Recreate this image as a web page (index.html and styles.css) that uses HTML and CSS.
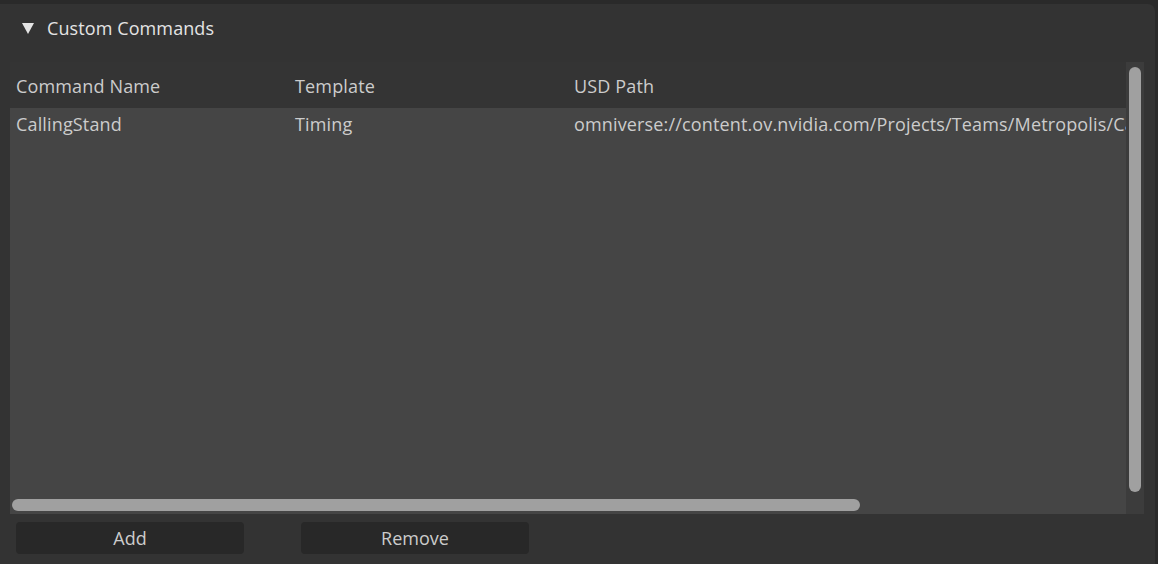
FILE: index.html
```html
<!DOCTYPE html>
<html lang="en">
<head>
	<meta charset="utf-8">
	<title>Custom Commands</title>
	<link rel="stylesheet" href="styles.css">
</head>
<body>

<div class="frame">
	<div class="title">
		<span class="arrow"></span>
		<span class="label">Custom Commands</span>
	</div>

	<div class="table">
		<div class="view">
			<div class="row head">
				<div class="cell">Command Name</div>
				<div class="cell">Template</div>
				<div class="cell">USD Path</div>
			</div>
			<div class="body">
				<div class="row">
					<div class="cell">CallingStand</div>
					<div class="cell">Timing</div>
					<div class="cell wide">omniverse://content.ov.nvidia.com/Projects/Teams/Metropolis/CallingStand.usd</div>
				</div>
				<div class="hscroll"><div class="thumb"></div></div>
			</div>
		</div>
		<div class="vscroll"><div class="thumb"></div></div>
	</div>

	<div class="buttons">
		<button type="button">Add</button>
		<button type="button">Remove</button>
	</div>
</div>

</body>
</html>
```

FILE: styles.css
```css
body {
	margin: 0;
	background-color: #2a2a2a;
	font-family: "Open Sans", "Noto Sans", sans-serif;
	color: #cccccc;
	overflow: hidden;
}

.frame {
	margin: 4px 3px 0 0;
	height: 560px;
	background-color: #333333;
	border-top-right-radius: 7px;
	display: flex;
	flex-direction: column;
}

/* collapsable header */
.title {
	display: flex;
	align-items: center;
	height: 48px;
	padding-left: 22px;
	color: #e4e4e4;
	font-size: 18px;
	font-weight: 500;
	letter-spacing: 0.1px;
}
.title .arrow {
	width: 0;
	height: 0;
	border-left: 6px solid transparent;
	border-right: 6px solid transparent;
	border-top: 11px solid #e4e4e4;
	margin-right: 13px;
}

.table {
	margin: 10px 0 0 10px;
	width: 1134px;
	height: 452px;
	display: flex;
}

.view {
	flex: 1;
	overflow: hidden;
	display: flex;
	flex-direction: column;
}

.row {
	display: flex;
	white-space: nowrap;
	font-size: 18px;
	font-weight: 500;
	letter-spacing: 0.15px;
}
.cell {
	width: 279px;
	flex: none;
	padding-left: 6px;
	box-sizing: border-box;
}
.cell.wide {width: auto;}

.row.head {
	height: 46px;
	padding-top: 2px;
	box-sizing: border-box;
	align-items: center;
	background-color: #343434;
}

.body {
	flex: 1;
	background-color: #454545;
	display: flex;
	flex-direction: column;
}
.body .row {
	height: 32px;
	align-items: center;
}

.hscroll {
	margin-top: auto;
	height: 12px;
	padding: 0 0 3px 2px;
}
.hscroll .thumb {
	width: 848px;
	height: 12px;
	border-radius: 6px;
	background-color: #a0a0a0;
}

.vscroll {
	width: 18px;
	background-color: #3c3c3c;
	padding: 5px 0 0 3px;
	box-sizing: border-box;
}
.vscroll .thumb {
	width: 12px;
	height: 425px;
	border-radius: 6px;
	background-color: #a0a0a0;
}

.buttons {
	display: flex;
	gap: 57px;
	padding: 8px 0 0 16px;
}
.buttons button {
	width: 228px;
	height: 32px;
	border: none;
	border-radius: 4px;
	background-color: #282828;
	color: #cccccc;
	font-family: inherit;
	font-size: 18px;
	font-weight: 500;
	padding: 0;
}
```
